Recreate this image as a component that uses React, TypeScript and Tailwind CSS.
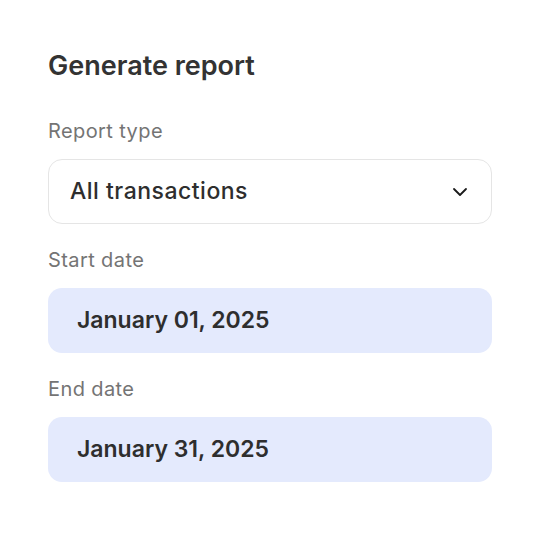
import React from "react";

const DateField = ({ label, value }: { label: string; value: string }) => (
  <div className="flex flex-col">
    <label className="text-[20px] text-[#747474] leading-none mt-[26px] tracking-[0.4px]">{label}</label>
    <div className="mt-[18px] h-[65px] rounded-[14px] bg-[#e4eafd] flex items-center px-[29px]">
      <span className="text-[23px] font-semibold text-[#2e2e2e]">{value}</span>
    </div>
  </div>
);

const App = () => {
  return (
    <div
      className="w-[540px] h-[559px] bg-white px-[48px] pt-[52px]"
      style={{ fontFamily: "Inter, 'Noto Sans', sans-serif" }}
    >
      <h1 className="text-[27px] font-semibold text-[#333333] leading-none">
        Generate report
      </h1>
      <div className="flex flex-col">
        <label className="text-[20px] text-[#747474] leading-none mt-[42px] tracking-[0.4px]">Report type</label>
        <div className="mt-[18px] h-[65px] rounded-[14px] border border-[#e5e5e5] flex items-center justify-between pl-[21px] pr-[23px]">
          <span className="text-[23px] font-medium text-[#2e2e2e] tracking-[0.5px]">All transactions</span>
          <svg width="16" height="10" viewBox="0 0 16 10" fill="none">
            <path d="M2 2l6 6 6-6" stroke="#1a1a1a" strokeWidth="1.8" strokeLinecap="round" strokeLinejoin="round" />
          </svg>
        </div>
      </div>
      <DateField label="Start date" value="January 01, 2025" />
      <DateField label="End date" value="January 31, 2025" />
    </div>
  );
};

export default App;
